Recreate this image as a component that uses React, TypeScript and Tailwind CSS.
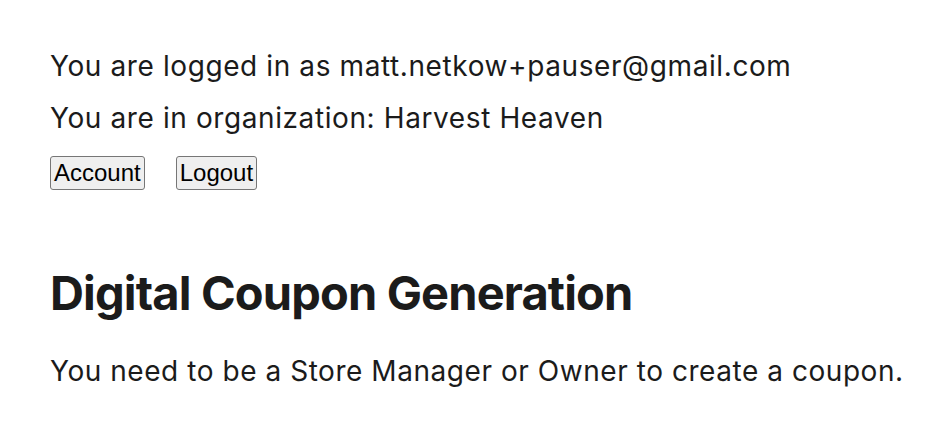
import React from 'react';

export default function App() {
  return (
    <div className="min-h-screen bg-white pl-[50px] pt-[46px] text-[#1b1b1b] font-['Inter','Roboto',sans-serif]">
      <p className="text-[28px] leading-[40px] tracking-[0.6px]">You are logged in as matt.netkow+pauser@gmail.com</p>
      <p className="mt-[12px] text-[28px] leading-[40px] tracking-[0.6px]">You are in organization: Harvest Heaven</p>
      <div className="mt-[18px] flex gap-[31px]">
        <button className="h-[34px] rounded-[3px] border border-[#767676] bg-[#efefef] px-[3px] font-['Liberation_Sans',Arial,sans-serif] text-[24px] leading-none text-black">
          Account
        </button>
        <button className="h-[34px] rounded-[3px] border border-[#767676] bg-[#efefef] px-[3px] font-['Liberation_Sans',Arial,sans-serif] text-[24px] leading-none text-black">
          Logout
        </button>
      </div>
      <h1 className="mt-[75px] text-[47px] font-bold leading-[56px] tracking-[-0.85px]">Digital Coupon Generation</h1>
      <p className="mt-[30px] text-[28px] leading-[40px] tracking-[0.55px]">You need to be a Store Manager or Owner to create a coupon.</p>
    </div>
  );
}
